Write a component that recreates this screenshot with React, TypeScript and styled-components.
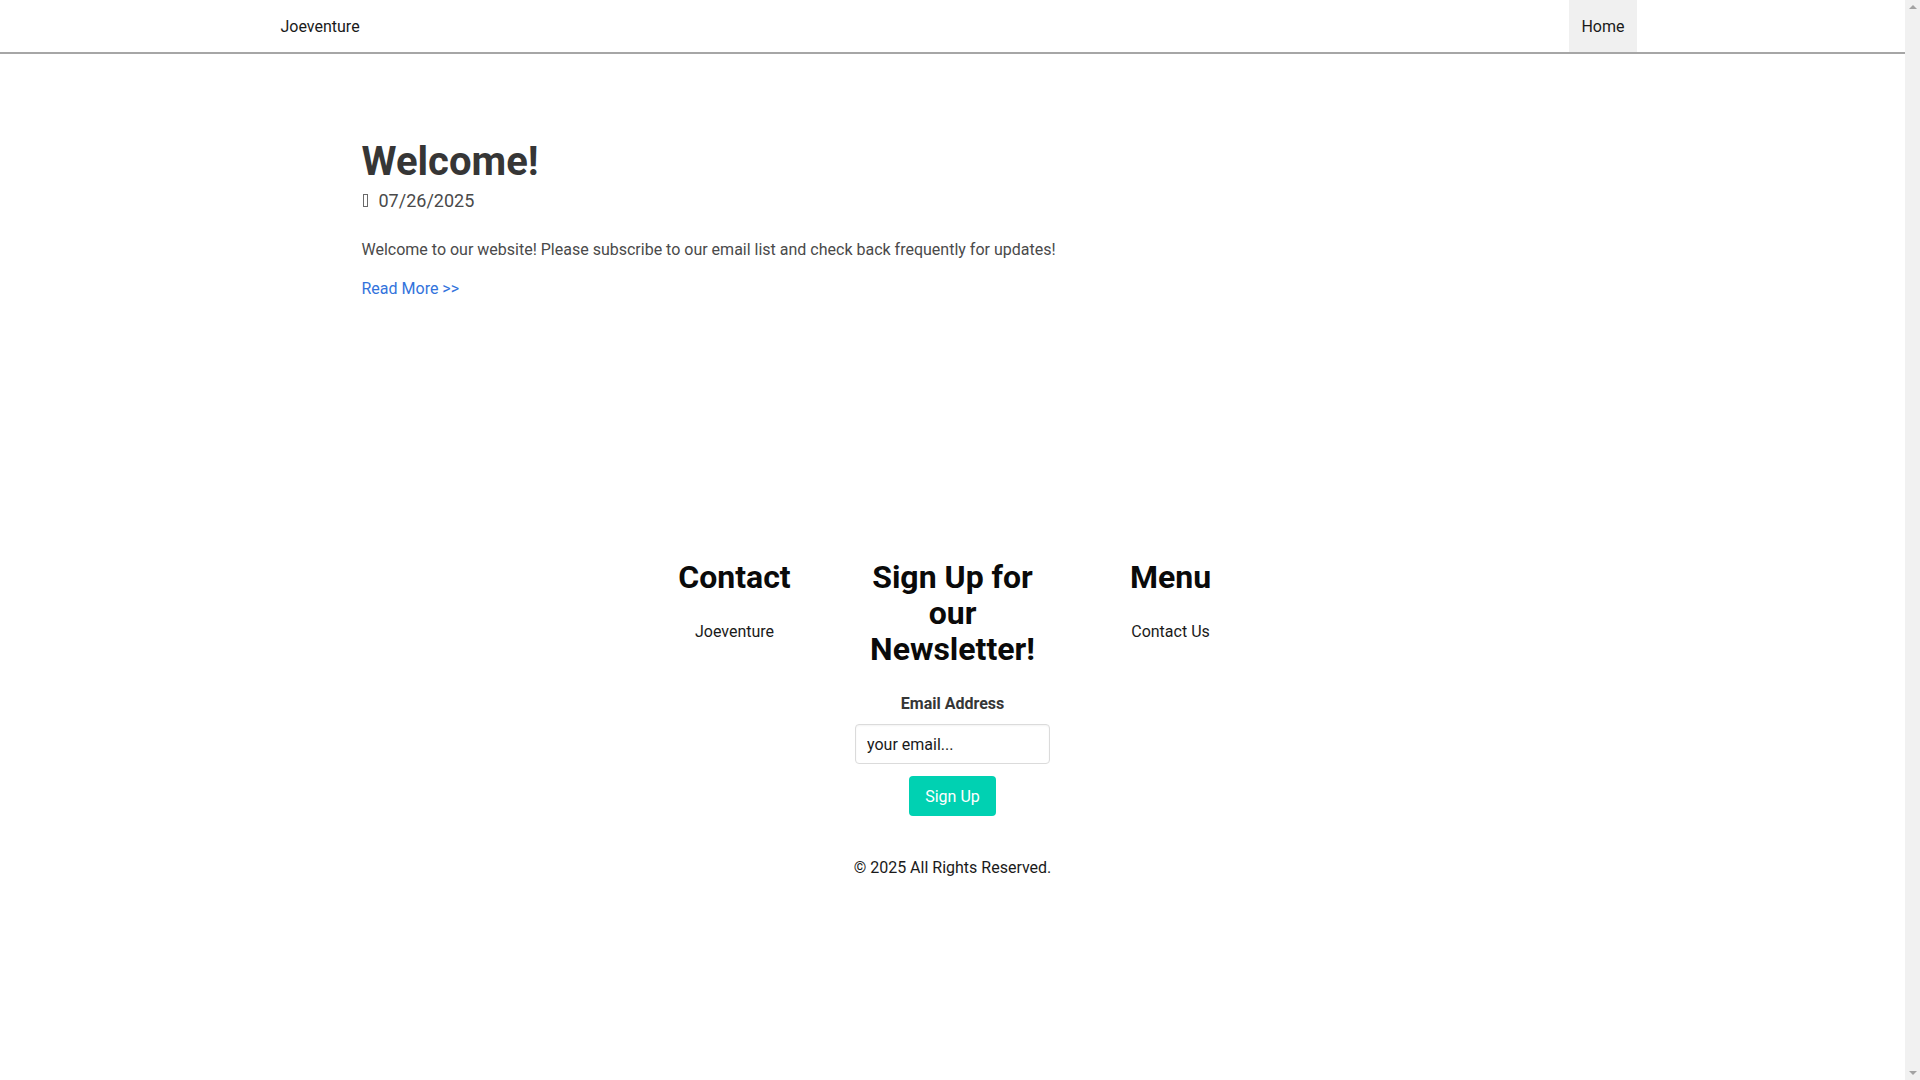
import React, { ReactElement } from "react";
import styled, { createGlobalStyle } from "styled-components";

const GlobalStyle = createGlobalStyle`
  html {
    background: #fff;
  }
  body {
    margin: 0;
    padding-right: 15px;
    font-family: Roboto, "Liberation Sans", sans-serif;
    font-size: 16px;
    color: #4a4a4a;
  }
  * {
    box-sizing: border-box;
  }
`;

// stand-in for the browser's classic scrollbar seen in the reference
const ScrollTrack = styled.div`
  position: fixed;
  top: 0;
  right: 0;
  bottom: 0;
  width: 15px;
  background: #f1f1f1;
  display: flex;
  flex-direction: column;
  justify-content: space-between;
  align-items: center;
  padding: 5px 0;
`;

const ScrollArrow = styled.span<{ $dir: "up" | "down" }>`
  width: 0;
  height: 0;
  border-left: 4px solid transparent;
  border-right: 4px solid transparent;
  border-bottom: ${({ $dir }) => ($dir === "up" ? "4px solid #a3a3a3" : "0")};
  border-top: ${({ $dir }) => ($dir === "down" ? "4px solid #a3a3a3" : "0")};
`;

const Container = styled.div`
  max-width: 1344px;
  margin: 0 auto;
`;

const Navbar = styled.nav`
  height: 54px;
  border-bottom: 2px solid #a6a6a6;
  background: #fff;

  > ${Container} {
    display: flex;
    align-items: stretch;
    justify-content: space-between;
    height: 52px;
  }
`;

const NavItem = styled.a<{ $active?: boolean; $edge: "left" | "right" }>`
  display: flex;
  align-items: center;
  padding: 0 12px;
  margin-left: ${({ $edge }) => ($edge === "left" ? "-12px" : "0")};
  margin-right: ${({ $edge }) => ($edge === "right" ? "-12px" : "0")};
  background: ${({ $active }) => ($active ? "#f0f0f0" : "transparent")};
  color: #1a1a1a;
  font-size: 16px;
  text-decoration: none;
  cursor: pointer;
`;

const Post = styled.article`
  padding: 85px 0 0 81px;

  > h1 {
    margin: 0;
    font-size: 40px;
    line-height: 45px;
    font-weight: 700;
    color: #363636;
  }

  > p {
    margin: 24px 0 0;
    line-height: 24px;
    color: #4a4a4a;
  }
`;

const PostDate = styled.div`
  display: flex;
  align-items: center;
  margin-top: 3px;
  font-size: 18px;
  line-height: 27px;
  color: #4a4a4a;
`;

const MissingIcon = styled.span`
  display: inline-block;
  width: 5px;
  height: 13px;
  margin: 0 11px 0 1px;
  border: 1px solid #6a6a6a;
`;

const ReadMore = styled.a`
  display: block;
  margin-top: 15px;
  line-height: 24px;
  color: #3273dc;
  text-decoration: none;
`;

const Footer = styled.footer`
  margin-top: 258px;
  padding-bottom: 60px;
  text-align: center;
`;

const FooterColumns = styled.div`
  display: grid;
  grid-template-columns: repeat(3, 218px);
  justify-content: center;
`;

const FooterColumn = styled.div`
  padding: 0 12px;
  display: flex;
  flex-direction: column;
  align-items: center;

  > h2 {
    margin: 0 0 25px;
    font-size: 32px;
    line-height: 36px;
    font-weight: 700;
    color: #0a0a0a;
  }

  > a {
    line-height: 24px;
    color: #1a1a1a;
    text-decoration: none;
  }
`;

const NewsletterForm = styled.form`
  display: flex;
  flex-direction: column;
  align-items: center;

  > label {
    font-weight: 700;
    line-height: 24px;
    color: #363636;
    margin-bottom: 8px;
  }
`;

const EmailInput = styled.input`
  width: 195px;
  height: 40px;
  padding: 0 11px;
  border: 1px solid #dbdbdb;
  border-radius: 4px;
  box-shadow: inset 0 1px 2px rgba(10, 10, 10, 0.05);
  font-family: Roboto, "Liberation Sans", sans-serif;
  font-size: 16px;
  color: #1a1a1a;

  &::placeholder {
    color: #1a1a1a;
    opacity: 1;
  }
`;

const SignUpButton = styled.button`
  margin-top: 12px;
  height: 40px;
  padding: 0 16px;
  border: none;
  border-radius: 4px;
  background: #00d1b2;
  color: #fff;
  font-family: Roboto, "Liberation Sans", sans-serif;
  font-size: 16px;
  cursor: pointer;
`;

const Copyright = styled.p`
  margin: 40px 0 0;
  line-height: 24px;
  color: #1a1a1a;
`;

export default function App(): ReactElement {
  return (
    <>
      <GlobalStyle />
      <Navbar>
        <Container>
          <NavItem $edge="left">Joeventure</NavItem>
          <NavItem $edge="right" $active>
            Home
          </NavItem>
        </Container>
      </Navbar>

      <Container>
        <Post>
          <h1>Welcome!</h1>
          <PostDate>
            <MissingIcon />
            07/26/2025
          </PostDate>
          <p>
            Welcome to our website! Please subscribe to our email list and check
            back frequently for updates!
          </p>
          <ReadMore href="#">Read More &gt;&gt;</ReadMore>
        </Post>
      </Container>

      <Footer>
        <FooterColumns>
          <FooterColumn>
            <h2>Contact</h2>
            <a href="#">Joeventure</a>
          </FooterColumn>
          <FooterColumn>
            <h2>Sign Up for our Newsletter!</h2>
            <NewsletterForm onSubmit={(e) => e.preventDefault()}>
              <label htmlFor="email">Email Address</label>
              <EmailInput id="email" type="email" placeholder="your email..." />
              <SignUpButton type="submit">Sign Up</SignUpButton>
            </NewsletterForm>
          </FooterColumn>
          <FooterColumn>
            <h2>Menu</h2>
            <a href="#">Contact Us</a>
          </FooterColumn>
        </FooterColumns>
        <Copyright>© 2025 All Rights Reserved.</Copyright>
      </Footer>

      <ScrollTrack>
        <ScrollArrow $dir="up" />
        <ScrollArrow $dir="down" />
      </ScrollTrack>
    </>
  );
}
